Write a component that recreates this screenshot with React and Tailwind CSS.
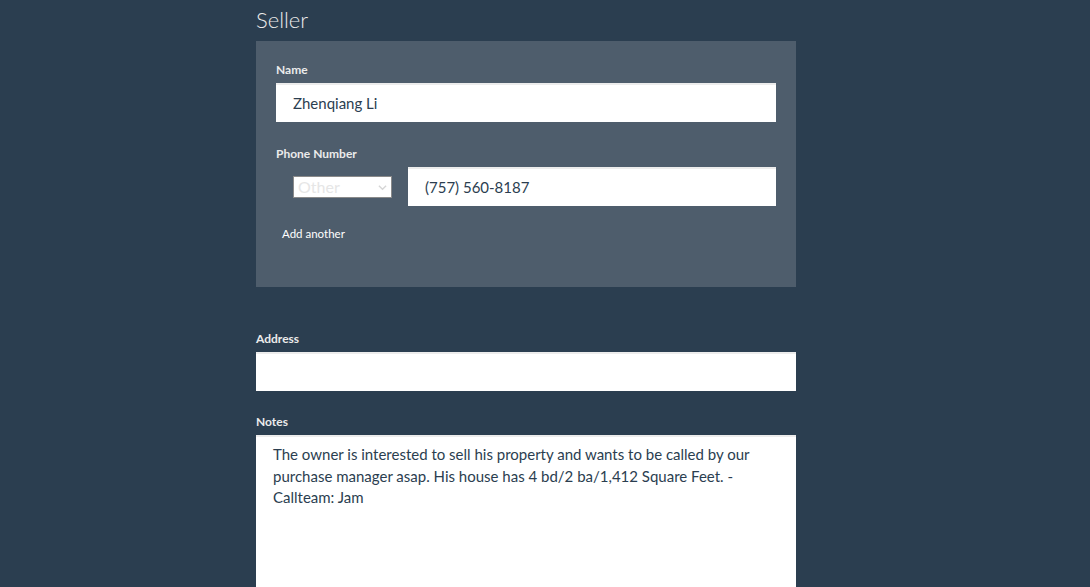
import React from 'react';

const Label = ({ children }) => (
  <label className="block text-[12px] font-bold text-[#ebebeb] mb-[5px] leading-[16px]">{children}</label>
);

const inputCls =
  "w-full bg-white text-[15px] text-[#2b3e50] px-[17px] outline-none shadow-[inset_0_2px_0_#ececec]";

const App = () => {
  return (
    <div className="min-h-[587px] bg-[#2b3e50] font-['Lato','Liberation_Sans',sans-serif] overflow-hidden">
      <div className="w-[540px] ml-[256px]">
        <h2 className="text-[22px] font-light text-[#ebebeb] leading-[26px] pt-[7px] pb-[8px]">Seller</h2>

        <div className="bg-[#4e5d6c] px-[20px] pt-[21px] pb-[45px]">
          <Label>Name</Label>
          <input className={inputCls + " h-[39px]"} defaultValue="Zhenqiang Li" />

          <div className="mt-[24px]">
            <Label>Phone Number</Label>
            <div className="flex items-center">
              <div className="w-[132px] pl-[17px] flex items-center">
                <div className="relative w-[99px] h-[22px] bg-white border border-[#8a8a8a] flex items-center">
                  <span className="text-[16px] text-[#e6e6e6] pl-[4px] leading-none">Other</span>
                  <svg className="absolute right-[4px] top-[6px]" width="9" height="9" viewBox="0 0 10 10" fill="none">
                    <path d="M1 3l4 4 4-4" stroke="#d6d6d6" strokeWidth="1.5" />
                  </svg>
                </div>
              </div>
              <input className={inputCls + " h-[39px] flex-1"} defaultValue="(757) 560-8187" />
            </div>
            <div className="mt-[20px] pl-[6px]">
              <span className="block text-[11.5px] text-white leading-[16px]">Add another</span>
            </div>
          </div>
        </div>

        <div className="mt-[44px]">
          <Label>Address</Label>
          <input className={inputCls + " h-[39px]"} defaultValue="" />
        </div>

        <div className="mt-[23px]">
          <Label>Notes</Label>
          <textarea
            className={inputCls + " h-[170px] py-[9px] pl-[17px] pr-[40px] leading-[21.5px] resize-none block"}
            defaultValue="The owner is interested to sell his property and wants to be called by our purchase manager asap. His house has 4 bd/2 ba/1,412 Square Feet. -Callteam: Jam"
          />
        </div>
      </div>
    </div>
  );
};

export default App;
